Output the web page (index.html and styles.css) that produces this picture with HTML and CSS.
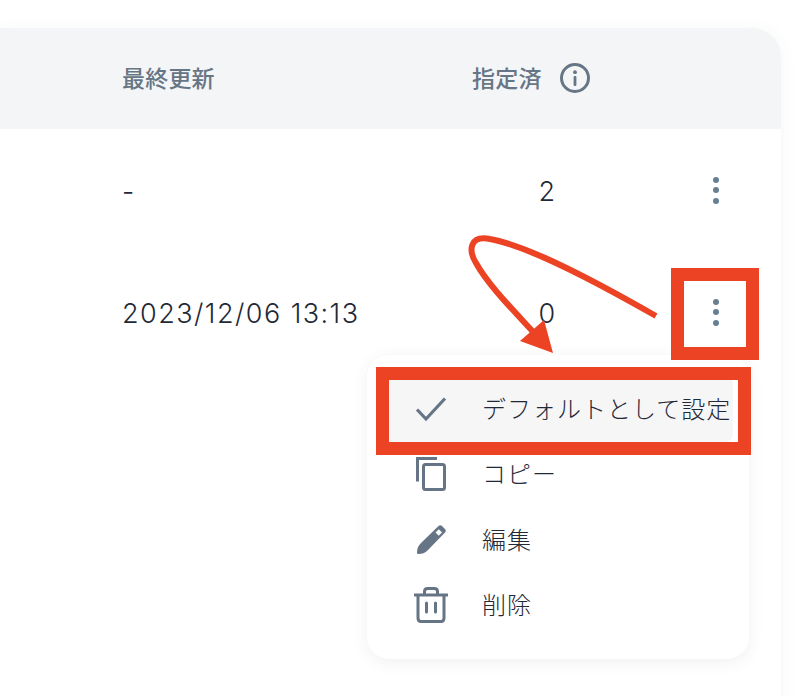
FILE: index.html
```html
<!DOCTYPE html>
<html lang="ja">
<head>
    <meta charset="UTF-8">
    <title>テンプレート一覧</title>
    <link rel="stylesheet" href="styles.css">
</head>
<body>

<div class="card">
    <div class="row head">
        <div>最終更新</div>
        <div class="assigned">指定済
            <svg class="info" width="32" height="32" viewBox="0 0 32 32">
                <circle cx="16" cy="16" r="13.5" fill="none" stroke="currentColor" stroke-width="3"/>
                <circle cx="16" cy="10.2" r="1.9" fill="currentColor"/>
                <rect x="14.6" y="14" width="2.8" height="10" rx="1" fill="currentColor"/>
            </svg>
        </div>
    </div>
    <div class="row">
        <div>-</div>
        <div class="count">2</div>
        <div class="kebab"><i></i><i></i><i></i></div>
    </div>
    <div class="row">
        <div>2023/12/06 13:13</div>
        <div class="count">0</div>
        <div class="kebab"><i></i><i></i><i></i></div>
    </div>
</div>

<div class="menu">
    <div class="item active">
        <svg width="36" height="36" viewBox="0 0 36 36"><path d="M4 18.5 L13 28 L32 7.5" fill="none" stroke="currentColor" stroke-width="3.2"/></svg>
        <span>デフォルトとして設定</span>
    </div>
    <div class="item">
        <svg width="36" height="36" viewBox="0 0 36 36">
            <path d="M4.5 25.5 V2.5 H24" fill="none" stroke="currentColor" stroke-width="3"/>
            <rect x="10.5" y="8.5" width="21" height="25" rx="2" fill="none" stroke="currentColor" stroke-width="3"/>
        </svg>
        <span>コピー</span>
    </div>
    <div class="item">
        <svg width="36" height="36" viewBox="0 0 36 36">
            <path fill-rule="evenodd" fill="currentColor" d="M25.5 4 C26.5 3 28 3 29 4 L32 7 C33 8 33 9.500 32 10.500 L15 28 C12 31 9 32 5.500 32 C4.500 32 4 31.500 4 30.500 C4 27 5 24 8 21 Z M25.800 7.200 L22.500 10.500 L25.700 13.700 L29 10.400 Z"/>
        </svg>
        <span>編集</span>
    </div>
    <div class="item">
        <svg width="36" height="36" viewBox="0 0 36 36">
            <path d="M1 8 H35 M11.500 8 V4.500 C11.500 2.800 12.500 1.500 14.500 1.500 H21.500 C23.500 1.500 24.500 2.800 24.500 4.500 V8" fill="none" stroke="currentColor" stroke-width="3"/>
            <path d="M5 8 V31 C5 33 6 34.500 8 34.500 H28 C30 34.500 31 33 31 31 V8" fill="none" stroke="currentColor" stroke-width="3"/>
            <path d="M13.500 16 V25 M22.500 16 V25" fill="none" stroke="currentColor" stroke-width="3" stroke-linecap="round"/>
        </svg>
        <span>削除</span>
    </div>
</div>

<div class="mark mark-kebab"></div>
<div class="mark mark-item"></div>
<svg class="arrow" width="810" height="696" viewBox="0 0 810 696">
    <path d="M656 316 C 600 284, 530 246, 490 239 C 470 235, 468 250, 476 263 C 488 285, 515 312, 536 335" fill="none" stroke="#ec4324" stroke-width="6"/>
    <path d="M544 320 L520 341 L553 353 Z" fill="#ec4324"/>
</svg>

</body>
</html>
```

FILE: styles.css
```css
body {
    margin: 0;
    height: 696px;
    overflow: hidden;
    background-color: #fff;
    font-family: Inter, "Noto Sans CJK JP", sans-serif;
    font-size: 27px;
    font-weight: 300;
    letter-spacing: 1.45px;
    color: #1f2937;
}
.card {
    width: 781px;
    height: 700px;
    margin-top: 28px;
    background-color: #fff;
    border-top-right-radius: 28px;
    box-shadow: 0 2px 18px rgba(60,70,85,0.05);
    overflow: hidden;
}
.row {
    box-sizing: border-box;
    display: grid;
    grid-template-columns: 350px 151px 158px;
    align-items: center;
    height: 122px;
    padding-left: 122px;
    padding-top: 2px;
}
.head {
    height: 101px;
    padding-top: 0;
    padding-bottom: 4px;
    background-color: #f3f5f7;
    color: #677685;
    font-size: 23px;
    font-weight: 500;
    letter-spacing: 0.2px;
}
.assigned {
    display: flex;
    align-items: center;
    gap: 17px;
    white-space: nowrap;
}
.info {
    margin-top: 2px;
}
.count {
    text-align: center;
}
.kebab {
    display: flex;
    flex-direction: column;
    align-items: center;
    gap: 4.5px;
    width: 24px;
    margin-top: -2px;
    margin-left: 81px;
}
.kebab i {
    width: 6px;
    height: 6px;
    border-radius: 50%;
    background-color: #677f92;
}
.menu {
    position: absolute;
    left: 367px;
    top: 355px;
    width: 350px;
    padding: 21px 16px 21px;
    background-color: #fff;
    border-radius: 22px;
    box-shadow: 0 3px 16px rgba(60,70,85,0.08);
}
.item {
    display: flex;
    align-items: center;
    gap: 33px;
    height: 65.5px;
    padding-left: 30px;
    border-radius: 8px;
    font-size: 24px;
    letter-spacing: 1px;
    white-space: nowrap;
}
.item span {
    padding-bottom: 3px;
}
.item svg {
    color: #667585;
    flex-shrink: 0;
}
.active {
    background-color: #f6f6f7;
}
.mark {
    position: absolute;
    box-sizing: border-box;
    border: 13px solid #ec4324;
}
.mark-kebab {
    left: 671px;
    top: 268px;
    width: 88px;
    height: 92px;
}
.mark-item {
    left: 376px;
    top: 367px;
    width: 375px;
    height: 88px;
}
.arrow {
    position: absolute;
    left: 0;
    top: 0;
}
```
